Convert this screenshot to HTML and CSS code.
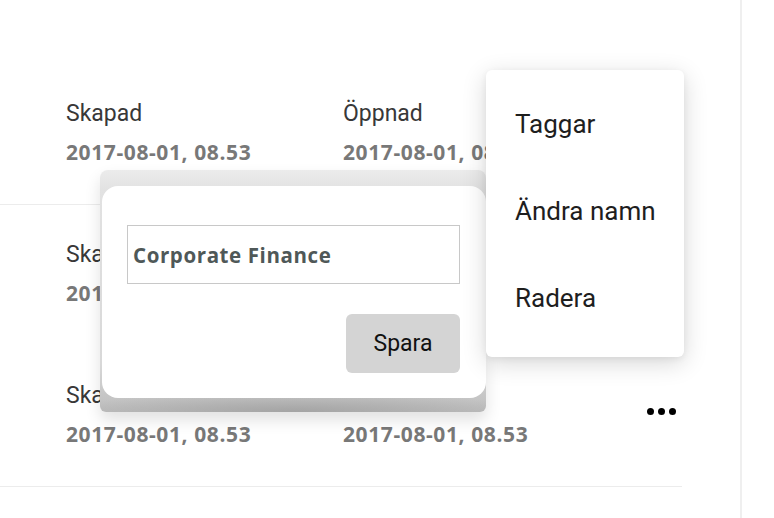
FILE: index.html
```html
<!DOCTYPE html>
<html lang="sv">
<head>
<meta charset="utf-8">
<title>Dokument</title>
<link rel="stylesheet" href="styles.css">
</head>
<body>
<div class="page">
  <main class="content">
    <div class="list">
      <div class="row sep">
        <div class="col">
          <div class="label">Skapad</div>
          <div class="date">2017-08-01, 08.53</div>
        </div>
        <div class="col">
          <div class="label">Öppnad</div>
          <div class="date">2017-08-01, 08.53</div>
        </div>
        <div class="more"><span></span><span></span><span></span></div>
      </div>
      <div class="row">
        <div class="col">
          <div class="label">Skapad</div>
          <div class="date">2017-08-01, 08.53</div>
        </div>
        <div class="col">
          <div class="label">Öppnad</div>
          <div class="date">2017-08-01, 08.53</div>
        </div>
        <div class="more"><span></span><span></span><span></span></div>
      </div>
      <div class="row sep">
        <div class="col">
          <div class="label">Skapad</div>
          <div class="date">2017-08-01, 08.53</div>
        </div>
        <div class="col">
          <div class="label">Öppnad</div>
          <div class="date">2017-08-01, 08.53</div>
        </div>
        <div class="more"><span></span><span></span><span></span></div>
      </div>
    </div>
  </main>
  <aside class="sidebar"></aside>
</div>

<div class="rename">
  <div class="rename-card">
    <div class="field">Corporate Finance</div>
    <div class="actions"><button class="save">Spara</button></div>
  </div>
</div>

<ul class="menu">
  <li>Taggar</li>
  <li>Ändra namn</li>
  <li>Radera</li>
</ul>
</body>
</html>
```

FILE: styles.css
```css
html, body {
  margin: 0;
  padding: 0;
  background: #ffffff;
}

body {
  font-family: Roboto, "Liberation Sans", sans-serif;
  width: 774px;
  height: 518px;
  overflow: hidden;
  position: relative;
}

.page {
  display: flex;
  height: 518px;
}

.content {
  width: 740px;
  flex: none;
}

.sidebar {
  flex: 1;
  border-left: 2px solid #efefef;
}

.list {
  width: 682px;
  padding-top: 64px;
}

.row {
  display: flex;
  height: 141px;
  box-sizing: border-box;
  padding: 36px 6px 0 66px;
}

.row.sep {
  border-bottom: 1px solid #ececec;
}

.col {
  width: 277px;
  flex: none;
}

.label {
  font-size: 23px;
  line-height: 28px;
  color: #383838;
  font-weight: 400;
}

.date {
  margin-top: 11px;
  font-family: "Open Sans", sans-serif;
  font-weight: 700;
  font-size: 21px;
  line-height: 26px;
  letter-spacing: 0.6px;
  color: #787878;
}

.more {
  margin-left: auto;
  display: flex;
  gap: 4px;
  margin-top: 26px;
  height: 7px;
}

.more span {
  width: 7px;
  height: 7px;
  border-radius: 50%;
  background: #000;
}

/* Rename dialog */
.rename {
  position: absolute;
  left: 100px;
  top: 170px;
  width: 386px;
  height: 242px;
  box-sizing: border-box;
  padding: 16px 0 14px 2px;
  background:
    radial-gradient(ellipse 60% 20px at 50% 100%, #a4a4a4 0%, rgba(164,164,164,0) 100%),
    linear-gradient(to bottom, #ececec 0%, #e2e2e2 8%, #d8d8d8 80%, #bdbdbd 100%);
  border-radius: 8px 8px 6px 6px;
  box-shadow: 0 8px 16px rgba(0, 0, 0, 0.12);
}

.rename-card {
  background: #fff;
  border-radius: 16px;
  height: 212px;
  box-sizing: border-box;
  padding: 39px 26px 25px 25px;
  display: flex;
  flex-direction: column;
}

.field {
  height: 59px;
  box-sizing: border-box;
  border: 1px solid #c8c8c8;
  padding-left: 5px;
  display: flex;
  align-items: center;
  font-family: "Open Sans", sans-serif;
  font-weight: 700;
  font-size: 20.5px;
  letter-spacing: 0.6px;
  color: #4f5858;
}

.actions {
  margin-top: 30px;
  display: flex;
  justify-content: flex-end;
}

.save {
  width: 114px;
  height: 59px;
  border: none;
  border-radius: 6px;
  background: #d4d4d4;
  font-family: Roboto, sans-serif;
  font-size: 23px;
  color: #111;
  padding: 0;
}

/* Context menu */
.menu {
  position: absolute;
  left: 486px;
  top: 70px;
  width: 198px;
  height: 287px;
  box-sizing: border-box;
  margin: 0;
  padding: 11px 0 0 29px;
  list-style: none;
  background: #fff;
  border-radius: 6px;
  box-shadow: 0 6px 24px rgba(0, 0, 0, 0.16), 0 2px 6px rgba(0, 0, 0, 0.06);
}

.menu li {
  font-size: 26px;
  line-height: 87px;
  height: 87px;
  color: #1e1e1e;
}
```
